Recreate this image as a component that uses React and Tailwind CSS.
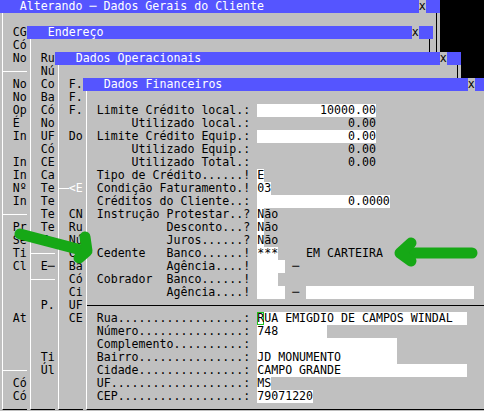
import React from "react";

// janelas empilhadas de um terminal: cada coluna = 7px, cada linha = 13px

const Win = ({ pos, title, children }) => (
  <div className={`absolute flex flex-col bg-[#c0c0c0] ${pos}`}>
    <div className="flex h-[13px] shrink-0 leading-[13px]">
      <div className="flex-1 whitespace-pre bg-[#5555ff] pl-[21px] text-white">{title}</div>
      <div className="w-[7px] text-center text-black">x</div>
      <div className="w-[14px] bg-[#5555ff]" />
    </div>
    <div className="mx-[3px] mb-[6px] flex-1 border-b border-l border-r border-b-black border-l-white border-r-black">
      {children}
    </div>
  </div>
);

const Row = ({ children }) => (
  <div className="flex h-[13px] whitespace-pre pl-[10px] leading-[13px] text-black">{children}</div>
);

const Sep = ({ dark }) => (
  <div className="flex h-[13px] items-center">
    <div className={`h-px w-full ${dark ? "bg-black" : "bg-white"}`} />
  </div>
);

const F = ({ children }) => <span className="bg-white">{children}</span>;

const Lines = ({ items }) =>
  items.map((t, i) => (t === "-" ? <Sep key={i} /> : <Row key={i}>{t}</Row>));

const geral = [
  "", "CG", "Có", "No", "-", "No", "No", "Op", "É", "In", "", "In", "In", "Nº", "In", "-",
  "Pr", "Se", "Ti", "Cl", "", "", "", "At", "", "", "", "-", "Có", "Có",
];

const endereco = [
  "", "Ru", "Nú", "Co", "Ba", "Có", "No", "UF", "Có", "CE", "Ca", "Te", "Te", "Te", "Te", "Te",
  "-", "E─", "-", "", "P.", "", "", "", "Ti", "Úl", "", "",
];

const operacionais1 = ["", "F.", "F.", "F.", "", "Do", "", "", ""];
const operacionais2 = ["", "CN", "Ru", "Nú", "Co", "Ba", "Có", "Ci", "UF", "CE", "", "", "", "", "", ""];

const endereco2 = [
  ["Rua..................:", null],
  ["Número...............:", "748".padEnd(10)],
  ["Complemento..........:", "".padEnd(20)],
  ["Bairro...............:", "JD MONUMENTO".padEnd(20)],
  ["Cidade...............:", "CAMPO GRANDE".padEnd(30)],
  ["UF...................:", "MS"],
  ["CEP..................:", "79071220"],
];

export default function App() {
  return (
    <div className="relative h-[411px] w-[484px] overflow-hidden bg-black font-['DejaVu_Sans_Mono',monospace] text-[11.6px]">
      <Win pos="left-[-1.3px] top-0 h-[416px] w-[441px]" title="Alterando ─ Dados Gerais do Cliente">
        <Lines items={geral} />
      </Win>

      <Win pos="left-[26.7px] top-[26px] h-[390px] w-[406px]" title="Endereço">
        <Lines items={endereco} />
      </Win>

      <Win pos="left-[54.7px] top-[52px] h-[364px] w-[406px]" title="Dados Operacionais">
        <Lines items={operacionais1} />
        <div className="flex h-[13px] items-center leading-[13px]">
          <div className="h-px w-[10px] bg-white" />
          <span className="whitespace-pre text-white">{"<E"}</span>
        </div>
        <Lines items={operacionais2} />
      </Win>

      <Win pos="left-[82.7px] top-[78px] h-[338px] w-[406px]" title="Dados Financeiros">
        <Row>{""}</Row>
        <Row>
          {"Limite Crédito local.: "}
          <F>{"10000.00".padStart(17)}</F>
        </Row>
        <Row>{"     Utilizado local.: " + "0.00".padStart(17)}</Row>
        <Row>
          {"Limite Crédito Equip.: "}
          <F>{"0.00".padStart(17)}</F>
        </Row>
        <Row>{"     Utilizado Equip.: " + "0.00".padStart(17)}</Row>
        <Row>{"     Utilizado Total.: " + "0.00".padStart(17)}</Row>
        <Row>
          {"Tipo de Crédito......! "}
          <F>E</F>
        </Row>
        <Row>
          {"Condição Faturamento.! "}
          <F>03</F>
        </Row>
        <Row>
          {"Créditos do Cliente..: "}
          <F>{"0.0000".padStart(19)}</F>
        </Row>
        <Row>
          {"Instrução Protestar..? "}
          <F>N</F>
          {"ão"}
        </Row>
        <Row>
          {"          Desconto...? "}
          <F>N</F>
          {"ão"}
        </Row>
        <Row>
          {"          Juros......? "}
          <F>N</F>
          {"ão"}
        </Row>
        <Row>
          {"Cedente   Banco......! "}
          <F>***</F>
          {"    EM CARTEIRA"}
        </Row>
        <Row>
          {"          Agência....! "}
          <F>{"    "}</F>
          {" ─"}
        </Row>
        <Row>
          {"Cobrador  Banco......! "}
          <F>{"   "}</F>
        </Row>
        <Row>
          {"          Agência....! "}
          <F>{"    "}</F>
          {" ─ "}
          <F>{"".padEnd(24)}</F>
        </Row>
        <Sep dark />
        {endereco2.map(([label, value], i) => (
          <Row key={i}>
            {label + " "}
            {value === null ? (
              <>
                <span className="bg-white shadow-[inset_0_0_0_1px_#1fc41f]">R</span>
                <F>{"UA EMIGDIO DE CAMPOS WINDAL".padEnd(29)}</F>
              </>
            ) : (
              <F>{value}</F>
            )}
          </Row>
        ))}
      </Win>

      <svg className="pointer-events-none absolute left-0 top-0" width="484" height="411" viewBox="0 0 484 411">
        <g fill="none" stroke="#16a816" strokeWidth="11" strokeLinecap="round" strokeLinejoin="round">
          <line x1="20" y1="234" x2="85" y2="251" />
          <polyline points="85,237 87,251 79,258" />
          <line x1="402" y1="253" x2="472" y2="253" />
          <polyline points="411,243 400,253 411,261" />
        </g>
      </svg>
    </div>
  );
}
